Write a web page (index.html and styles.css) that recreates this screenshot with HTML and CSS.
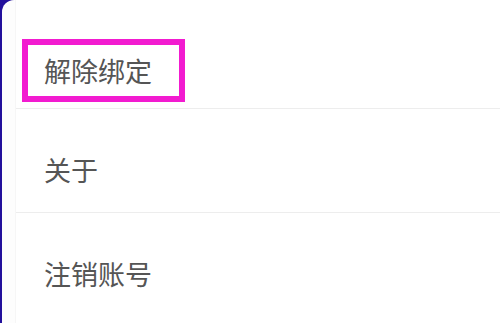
FILE: index.html
```html
<!DOCTYPE html>
<html lang="zh-CN">
<head>
<meta charset="utf-8">
<link rel="stylesheet" href="styles.css">
</head>
<body>
<div class="screen">
  <div class="card">
    <ul class="menu">
      <li class="row row-first">
        <span class="label">解除绑定</span>
        <span class="highlight"></span>
      </li>
      <li class="row"><span class="label">关于</span></li>
      <li class="row row-last"><span class="label">注销账号</span></li>
    </ul>
  </div>
</div>
</body>
</html>
```
FILE: styles.css
```css
html, body {
  margin: 0;
  padding: 0;
  width: 500px;
  height: 323px;
  overflow: hidden;
  background: #22109c;
}
.screen {
  display: flex;
  height: 323px;
  padding-left: 2px;
  box-sizing: border-box;
}
.card {
  flex: 1;
  background: #fdfdfd;
  border-top-left-radius: 12px;
  padding-left: 13px;
}
.menu {
  list-style: none;
  margin: 0;
  padding: 0;
  background: #ffffff;
  border-left: 1px solid #f6f6f6;
  height: 100%;
  box-sizing: border-box;
}
.row {
  position: relative;
  height: 104px;
  box-sizing: border-box;
  border-bottom: 1px solid #ededed;
  padding-top: 47px;
  padding-left: 28px;
}
.row-first {
  height: 109px;
  padding-top: 57px;
}
.row-last {
  border-bottom: none;
}
.label {
  display: block;
  font-family: "Noto Sans CJK SC", "Noto Sans", sans-serif;
  font-size: 27px;
  line-height: 27px;
  color: #555555;
}
.highlight {
  position: absolute;
  left: 6px;
  top: 39px;
  width: 163px;
  height: 63px;
  box-sizing: border-box;
  border: 6px solid #f21bd0;
}
```
